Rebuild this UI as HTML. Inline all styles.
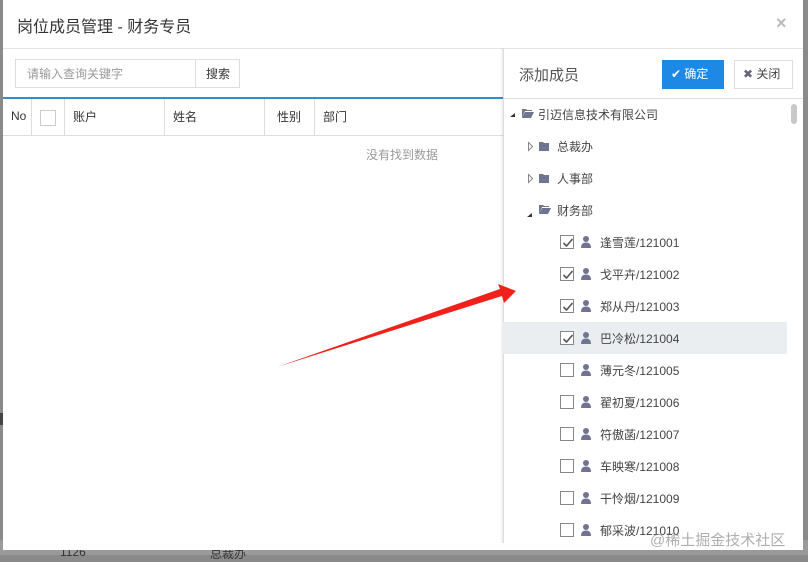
<!DOCTYPE html>
<html><head><meta charset="utf-8"><style>
*{box-sizing:border-box;margin:0;padding:0}
html,body{width:808px;height:555px}
body{background:#8a8a8a;position:relative;overflow:hidden;font-family:"Liberation Sans","Noto Sans CJK SC",sans-serif;color:#555}
.dlg{position:absolute;left:3px;top:0;width:800px;height:550px;background:#fff}
.a{position:absolute;white-space:nowrap}
.t{font-size:12px}
.cb{position:absolute;width:14px;height:14px;border:1px solid #888;background:#fff}
.cb svg{position:absolute;left:1px;top:1px}
</style></head><body>
<div class="a" style="left:0;top:540px;width:808px;height:15px;background:#9a9a9a"></div>
<div class="a t" style="left:60px;top:545px;color:#333">1126</div>
<div class="a t" style="left:210px;top:545px;color:#333">总裁办</div>
<div class="a" style="left:0;top:413px;width:3px;height:12px;background:#444"></div>
<div class="dlg">
 <div class="a" style="left:14px;top:13px;font-size:16px;color:#333">岗位成员管理 - 财务专员</div>
 <div class="a" style="left:773px;top:13px;font-size:18px;color:#bbb;font-weight:bold">×</div>
 <div class="a" style="left:0;top:48px;width:800px;height:1px;background:#e5e5e5"></div>
 <div class="a" style="left:12px;top:59px;width:181px;height:29px;border:1px solid #ddd"></div>
 <div class="a t" style="left:24px;top:65px;color:#999">请输入查询关键字</div>
 <div class="a" style="left:193px;top:59px;width:44px;height:29px;border:1px solid #ddd;border-left:none"></div>
 <div class="a t" style="left:203px;top:65px;color:#333">搜索</div>
 <div class="a" style="left:0;top:97px;width:500px;height:2px;background:#2e8fd0"></div>
 <div class="a" style="left:0;top:135px;width:500px;height:1px;background:#ddd"></div>
 <div class="a" style="left:28px;top:99px;width:1px;height:36px;background:#ddd"></div>
 <div class="a" style="left:61px;top:99px;width:1px;height:36px;background:#ddd"></div>
 <div class="a" style="left:161px;top:99px;width:1px;height:36px;background:#ddd"></div>
 <div class="a" style="left:261px;top:99px;width:1px;height:36px;background:#ddd"></div>
 <div class="a" style="left:311px;top:99px;width:1px;height:36px;background:#ddd"></div>
 <div class="a t" style="left:8px;top:109px;color:#333">No</div>
 <div class="cb" style="left:37px;top:110px;width:16px;height:16px;border-color:#ccc"></div>
 <div class="a t" style="left:70px;top:108px;color:#333">账户</div>
 <div class="a t" style="left:170px;top:108px;color:#333">姓名</div>
 <div class="a t" style="left:274px;top:108px;color:#333">性别</div>
 <div class="a t" style="left:320px;top:108px;color:#333">部门</div>
 <div class="a t" style="left:363px;top:146px;color:#999">没有找到数据</div>
</div>
<div class="a" style="left:500px;top:48px;width:3px;height:495px;background:linear-gradient(to right,rgba(0,0,0,0),rgba(0,0,0,.08))"></div>
<div class="a" style="left:503px;top:49px;width:300px;height:494px;background:#fff;border-left:1px solid #ddd"></div>
<div class="a" style="left:503px;top:98px;width:300px;height:1px;background:#ddd"></div>
<div class="a" style="left:519px;top:64px;font-size:15px;color:#555">添加成员</div>
<div class="a" style="left:662px;top:60px;width:62px;height:29px;background:#1e88e5;color:#fff;font-size:12px;line-height:29px;padding-left:9px">✔ 确定</div>
<div class="a" style="left:734px;top:60px;width:59px;height:29px;border:1px solid #ddd;color:#444;font-size:12px;line-height:27px;padding-left:8px"><span style="color:#667">✖</span> 关闭</div>
<div class="a" style="left:791px;top:104px;width:6px;height:20px;background:#c8c8c8;border-radius:3px"></div>
<div class="a" style="left:503px;top:322px;width:284px;height:32px;background:#eaeef1"></div>
<svg class="a" style="left:0;top:0" width="808" height="555">
 <g fill="#333"><path d="M510 117l5-4v4z"/><path d="M527 217l5-4v4z"/></g>
 <g fill="none" stroke="#888"><path d="M528.5 142.5l4 4-4 4z"/><path d="M528.5 174.5l4 4-4 4z"/></g>
 <g fill="#6f7590">
  <path d="M522 109h4l1 1h5v1h-7l-3 7z"/><path d="M525 112h9l-3 6h-9z"/>
  <path d="M539 142h4l1 1h5v8h-10z"/><path d="M539 174h4l1 1h5v8h-10z"/>
  <path d="M539 205h4l1 1h5v1h-7l-3 7z"/><path d="M542 208h9l-3 6h-9z"/>
 </g>
 <path d="M277 367L500 289L498 284L516 291L504 303L502 296Z" fill="#f0201a"/>
</svg>
<div class="a t" style="left:538px;top:106px;color:#444">引迈信息技术有限公司</div>
<div class="a t" style="left:557px;top:138px;color:#444">总裁办</div>
<div class="a t" style="left:557px;top:170px;color:#444">人事部</div>
<div class="a t" style="left:557px;top:202px;color:#444">财务部</div>
<div id="m"></div>
<script>
var n=["逢雪莲","戈平卉","郑从丹","巴冷松","薄元冬","翟初夏","符傲菡","车映寒","干怜烟","郁采波"],h="";
for(var i=0;i<10;i++){var y=235+i*32,c=i<4;
h+='<div class="cb" style="left:560px;top:'+y+'px">'+(c?'<svg width="12" height="12"><path d="M1.5 6l3 3 6-7" fill="none" stroke="#555" stroke-width="1.6"/></svg>':'')+'</div>';
h+='<svg class="a" style="left:581px;top:'+(y+1)+'px" width="10" height="12"><circle cx="5" cy="3" r="3" fill="#6f7590"/><path d="M0 12q0-5.5 5-5.5t5 5.5z" fill="#6f7590"/></svg>';
h+='<div class="a t" style="left:600px;top:'+(y-1)+'px;color:#444">'+n[i]+'/1210'+(i<9?'0'+(i+1):'10')+'</div>';}
document.getElementById('m').innerHTML=h;
</script>
<div class="a" style="left:650px;top:529px;font-size:15px;color:rgba(120,120,120,.6)">@稀土掘金技术社区</div>
</body></html>
